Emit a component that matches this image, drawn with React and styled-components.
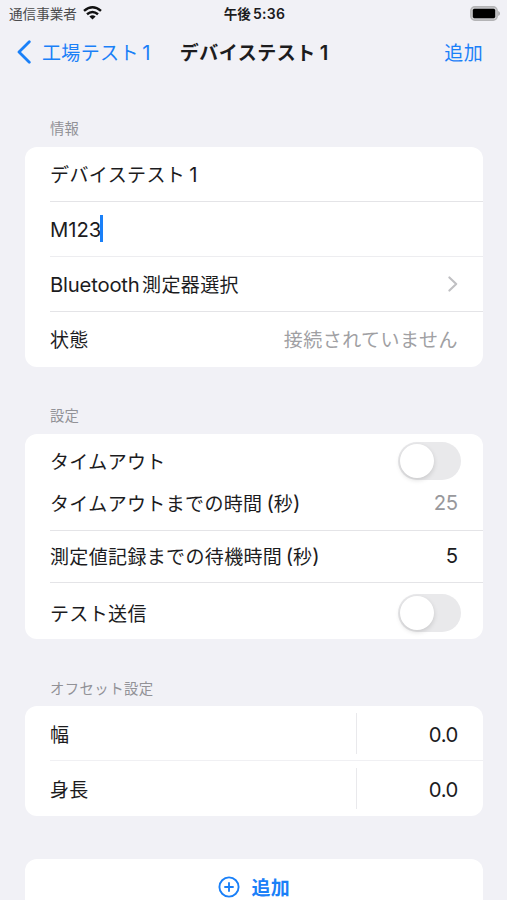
import React from "react";
import styled, { createGlobalStyle } from "styled-components";

const GlobalStyle = createGlobalStyle`
  html, body { margin: 0; height: 900px; overflow: hidden; background: #f1f1f6; }
  body { font-family: Inter, "Noto Sans CJK JP", sans-serif; color: #1c1c1e; }
  * { box-sizing: border-box; }
`;

const Screen = styled.main`
  width: 507px;
  height: 900px;
  overflow: hidden;
  background: #f1f1f6;
`;

const Label = styled.span`
  font-family: "Noto Sans CJK JP", sans-serif;
  font-size: ${(p) => p.$size || 19}px;
  letter-spacing: ${(p) => p.$track ?? 0.35}px;
  font-weight: ${(p) => p.$weight || 400};
  color: ${(p) => p.$color || "inherit"};
  margin-left: ${(p) => p.$gap || 0}px;
  line-height: 24px;
  white-space: nowrap;
`;

const Latin = styled.span`
  font-family: Inter, sans-serif;
  font-size: ${(p) => p.$size || 20.3}px;
  letter-spacing: ${(p) => p.$track ?? -0.2}px;
  font-weight: ${(p) => p.$weight || 400};
  color: ${(p) => p.$color || "inherit"};
  margin-left: ${(p) => p.$gap || 0}px;
  padding-top: ${(p) => p.$drop || 0}px;
  line-height: 24px;
  white-space: nowrap;
`;

const StatusBar = styled.header`
  display: grid;
  grid-template-columns: 1fr auto 1fr;
  align-items: center;
  height: 27px;
  padding: 0 7px 1px 9px;
`;

const Carrier = styled.div`
  display: flex;
  align-items: center;
  gap: 6px;
`;

const BatterySlot = styled.div`
  display: flex;
  justify-content: flex-end;
`;

const NavBar = styled.nav`
  display: grid;
  grid-template-columns: 1fr auto 1fr;
  align-items: center;
  height: 52px;
  padding: 0 24px 2px 17px;
`;

const BackButton = styled.button`
  display: flex;
  align-items: center;
  gap: 11px;
  padding: 0;
  border: 0;
  background: none;
  color: #1a80f8;
`;

const NavAction = styled.button`
  justify-self: end;
  padding: 0;
  border: 0;
  background: none;
  color: #1a80f8;
`;

const Content = styled.div`
  padding: 37px 24.5px 0 25px;
`;

const Section = styled.section`
  margin-bottom: ${(p) => p.$after}px;
`;

const SectionTitle = styled.h2`
  display: flex;
  align-items: center;
  height: 24px;
  margin: 0 0 6.5px 25px;
  color: #929297;
`;

const Card = styled.div`
  overflow: hidden;
  border-radius: 12px;
  background: #fff;
`;

const Row = styled.div`
  display: flex;
  align-items: center;
  justify-content: space-between;
  height: ${(p) => p.$height || 55}px;
  margin-left: 25px;
  padding: ${(p) => p.$padTop || 0}px ${(p) => p.$right || 24.5}px ${(p) => p.$padBottom || 0}px 0;
  border-bottom: ${(p) => (p.$line ? `1.3px solid ${p.$line}` : "0")};
`;

const Field = styled.div`
  display: flex;
  align-items: center;
  padding-left: ${(p) => p.$shift || 0}px;
`;

const Caret = styled.span`
  width: 3px;
  height: 27px;
  margin-left: -1px;
  background: #1a80f8;
`;

const Toggle = styled.button`
  display: flex;
  width: 63px;
  height: 38px;
  padding: 2px;
  border: 0;
  border-radius: 19px;
  background: #e9e9eb;
`;

const Knob = styled.span`
  width: 34px;
  height: 34px;
  border-radius: 50%;
  background: #fff;
  box-shadow: 0 2px 5px rgba(0, 0, 0, 0.14);
`;

const ValueCell = styled.div`
  display: flex;
  align-items: center;
  justify-content: flex-end;
  width: 102px;
  height: 41px;
  border-left: 1px solid #e9e9ec;
`;

const AddButton = styled.button`
  display: flex;
  align-items: center;
  justify-content: center;
  gap: 11px;
  width: 100%;
  height: 55px;
  padding: 0 0 0 1px;
  border: 0;
  background: none;
  color: #1a80f8;
`;

const WifiIcon = () => (
  <svg width="19" height="14" viewBox="0 0 19 14">
    <g fill="none" stroke="#111" strokeWidth="2.5">
      <path d="M1 4.9 Q9.5 -2.3 18 4.9" />
      <path d="M4 8.3 Q9.5 3.7 15 8.3" />
    </g>
    <path d="M6.4 10.5 Q9.5 8.2 12.6 10.5 L9.5 13.5Z" fill="#111" />
  </svg>
);

const BatteryIcon = () => (
  <svg width="30" height="15" viewBox="0 0 30 15">
    <rect x="0.8" y="0.8" width="26.4" height="13.4" rx="4" fill="#c9c9cc" stroke="#b4b4b6" strokeWidth="1.4" />
    <rect x="2.8" y="2.8" width="22.4" height="9.4" rx="1.6" fill="#000" />
    <path d="M28.2 5 Q30 5.6 30 7.5 Q30 9.4 28.2 10Z" fill="#a8a8aa" />
  </svg>
);

const BackIcon = () => (
  <svg width="14" height="24" viewBox="0 0 14 24">
    <path d="M12.3 1.7 L2 12 L12.3 22.3" fill="none" stroke="#1a80f8" strokeWidth="2.8" strokeLinecap="round" strokeLinejoin="round" />
  </svg>
);

const DisclosureIcon = () => (
  <svg width="10" height="16" viewBox="0 0 10 16">
    <path d="M1.4 1.4 L8.2 8 L1.4 14.6" fill="none" stroke="#c0c0c3" strokeWidth="2.1" strokeLinecap="round" strokeLinejoin="round" />
  </svg>
);

const PlusCircleIcon = () => (
  <svg width="22" height="22" viewBox="0 0 22 22">
    <g fill="none" stroke="#1a80f8" strokeWidth="1.9" strokeLinecap="round">
      <circle cx="11" cy="11" r="9.6" />
      <path d="M11 7 V15 M7 11 H15" />
    </g>
  </svg>
);

const Switch = ({ label }) => (
  <Toggle role="switch" aria-checked="false" aria-label={label}>
    <Knob />
  </Toggle>
);

export default function App() {
  return (
    <Screen>
      <GlobalStyle />
      <StatusBar>
        <Carrier>
          <Label $size={13.6} $track={0} $color="#4a4a4c">通信事業者</Label>
          <WifiIcon />
        </Carrier>
        <Field>
          <Label $size={13.6} $track={0} $weight={700}>午後</Label>
          <Latin $size={14} $track={0.3} $weight={600} $gap={2} $drop={1}>5:36</Latin>
        </Field>
        <BatterySlot><BatteryIcon /></BatterySlot>
      </StatusBar>

      <NavBar>
        <BackButton>
          <BackIcon />
          <Field>
            <Label>工場テスト</Label>
            <Latin $gap={3.5} $drop={1}>1</Latin>
          </Field>
        </BackButton>
        <Field $shift={8}>
          <Label $weight={700} $track={0.5}>デバイステスト</Label>
          <Latin $weight={600} $gap={4} $drop={1}>1</Latin>
        </Field>
        <NavAction><Label>追加</Label></NavAction>
      </NavBar>

      <Content>
        <Section $after={36.5}>
          <SectionTitle><Label $size={14.4} $track={0.2}>情報</Label></SectionTitle>
          <Card>
            <Row $line="#e4e4e7">
              <Field>
                <Label $track={0.4}>デバイステスト</Label>
                <Latin $gap={4} $drop={2}>1</Latin>
              </Field>
            </Row>
            <Row $line="#ededf0">
              <Field><Latin $track={-0.05} $drop={2}>M123</Latin><Caret /></Field>
            </Row>
            <Row $line="#e4e4e7">
              <Field>
                <Latin $drop={2}>Bluetooth</Latin>
                <Label $gap={2.5}>測定器選択</Label>
              </Field>
              <DisclosureIcon />
            </Row>
            <Row>
              <Label>状態</Label>
              <Label $track={0.5} $color="#a0a0a3">接続されていません</Label>
            </Row>
          </Card>
        </Section>

        <Section $after={36.5}>
          <SectionTitle><Label $size={14.4} $track={0.2}>設定</Label></SectionTitle>
          <Card>
            <Row $height={54} $right={22}>
              <Label>タイムアウト</Label>
              <Switch label="タイムアウト" />
            </Row>
            <Row $height={43.5} $padBottom={12} $line="#e4e4e7">
              <Field>
                <Label>タイムアウトまでの時間</Label>
                <Latin $gap={4}>(</Latin>
                <Label>秒</Label>
                <Latin>)</Latin>
              </Field>
              <Latin $color="#98989c" $drop={1}>25</Latin>
            </Row>
            <Row $height={52} $padBottom={1} $line="#e4e4e7">
              <Field>
                <Label>測定値記録までの待機時間</Label>
                <Latin $gap={3.5}>(</Latin>
                <Label>秒</Label>
                <Latin>)</Latin>
              </Field>
              <Latin>5</Latin>
            </Row>
            <Row $height={56} $padTop={3} $right={22}>
              <Label>テスト送信</Label>
              <Switch label="テスト送信" />
            </Row>
          </Card>
        </Section>

        <Section $after={43}>
          <SectionTitle><Label $size={14.4} $track={0.4}>オフセット設定</Label></SectionTitle>
          <Card>
            <Row $padTop={1} $line="#f0f0f3">
              <Label>幅</Label>
              <ValueCell><Latin $track={-0.4} $drop={2}>0.0</Latin></ValueCell>
            </Row>
            <Row>
              <Label>身長</Label>
              <ValueCell><Latin $track={-0.4} $drop={2}>0.0</Latin></ValueCell>
            </Row>
          </Card>
        </Section>

        <Card>
          <AddButton>
            <PlusCircleIcon />
            <Label $weight={700}>追加</Label>
          </AddButton>
        </Card>
      </Content>
    </Screen>
  );
}
